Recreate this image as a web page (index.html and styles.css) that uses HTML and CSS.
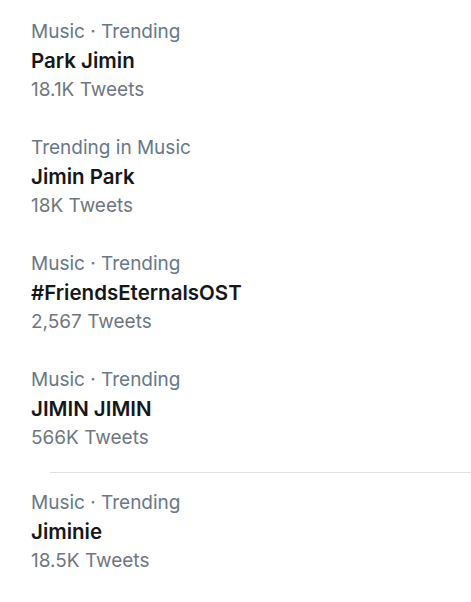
FILE: index.html
```html
<!DOCTYPE html>
<html lang="en">
  <head>
    <meta charset="UTF-8" />
    <title>Trends</title>
    <link rel="stylesheet" href="styles.css">
  </head>
  <body>
    <div class="trends">
      <div class="trend">
        <div class="meta">Music · Trending</div>
        <div class="name">Park Jimin</div>
        <div class="count">18.1K Tweets</div>
      </div>
      <div class="trend">
        <div class="meta">Trending in Music</div>
        <div class="name">Jimin Park</div>
        <div class="count">18K Tweets</div>
      </div>
      <div class="trend">
        <div class="meta">Music · Trending</div>
        <div class="name">#FriendsEternalsOST</div>
        <div class="count">2,567 Tweets</div>
      </div>
      <div class="trend">
        <div class="meta">Music · Trending</div>
        <div class="name">JIMIN JIMIN</div>
        <div class="count">566K Tweets</div>
      </div>
      <div class="divider"></div>
      <div class="trend">
        <div class="meta">Music · Trending</div>
        <div class="name">Jiminie</div>
        <div class="count">18.5K Tweets</div>
      </div>
    </div>
  </body>
</html>
```

FILE: styles.css
```css
body {
  margin: 0;
  padding: 0;
  background: #fff;
  font-family: Inter, "Liberation Sans", sans-serif;
}

.trends {
  padding-top: 3px;
}

.trend {
  padding: 14px 0 15px 31px;
}

.trend div {
  line-height: 29px;
}

.meta {
  font-size: 19px;
  color: #66788a;
}

.name {
  font-size: 20.5px;
  font-weight: 600;
  color: #14171a;
}

.count {
  font-size: 19px;
  color: #6e7781;
}

.divider {
  height: 1px;
  margin: 5px 0 1px 50px;
  background: #dcdfe2;
}
```
